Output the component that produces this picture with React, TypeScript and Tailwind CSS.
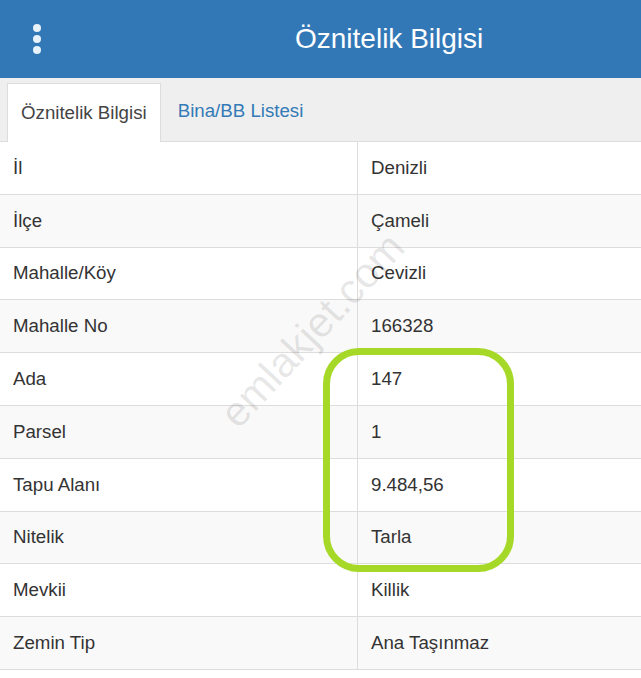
const rows: [string, string][] = [
  ['İl', 'Denizli'],
  ['İlçe', 'Çameli'],
  ['Mahalle/Köy', 'Cevizli'],
  ['Mahalle No', '166328'],
  ['Ada', '147'],
  ['Parsel', '1'],
  ['Tapu Alanı', '9.484,56'],
  ['Nitelik', 'Tarla'],
  ['Mevkii', 'Killik'],
  ['Zemin Tip', 'Ana Taşınmaz'],
]

function App() {
  return (
    <div
      className="relative w-[641px] h-[678px] overflow-hidden bg-white text-[#333]"
      style={{ fontFamily: '"Liberation Sans", Arial, sans-serif' }}
    >
      {/* Header */}
      <div className="h-[78px] bg-[#3378b6] flex items-center">
        <div className="w-[74px] flex flex-col items-center gap-[3px]">
          <span className="w-[8px] h-[8px] rounded-full bg-[#e8f2fb]" />
          <span className="w-[8px] h-[8px] rounded-full bg-[#e8f2fb]" />
          <span className="w-[8px] h-[8px] rounded-full bg-[#e8f2fb]" />
        </div>
        <h1 className="pl-[221px] text-[28px] text-white leading-none">Öznitelik Bilgisi</h1>
      </div>

      {/* Tabs */}
      <div className="h-[64px] bg-[#efefef] flex items-end pl-[7px] border-b border-[#ddd]">
        <div className="h-[59px] -mb-px px-[13px] flex items-center bg-white border border-b-0 border-[#ddd] text-[18.7px] text-[#444]">
          Öznitelik Bilgisi
        </div>
        <div className="h-[59px] px-[17px] flex items-center text-[18.7px] text-[#337ab7]">
          Bina/BB Listesi
        </div>
      </div>

      {/* Table */}
      <div className="flex flex-col">
        {rows.map(([label, value], i) => (
          <div
            key={label}
            className={`flex h-[52.8px] border-b border-[#ddd] text-[18.7px] ${i % 2 === 1 ? 'bg-[#f9f9f9]' : 'bg-white'}`}
          >
            <div className="w-[358px] pl-[13px] flex items-center border-r border-[#ddd]">{label}</div>
            <div className="flex-1 pl-[13px] flex items-center">{value}</div>
          </div>
        ))}
      </div>

      {/* Watermark */}
      <div className="absolute left-[312px] top-[330px] -translate-x-1/2 -translate-y-1/2 -rotate-[47deg] text-[42px] font-light text-black/10 whitespace-nowrap pointer-events-none">
        emlakjet.com
      </div>

      {/* Highlight */}
      <div className="absolute left-[323px] top-[348px] w-[191px] h-[224px] border-[7px] border-[#a6d827] rounded-[36px] pointer-events-none" />
    </div>
  )
}

export default App
